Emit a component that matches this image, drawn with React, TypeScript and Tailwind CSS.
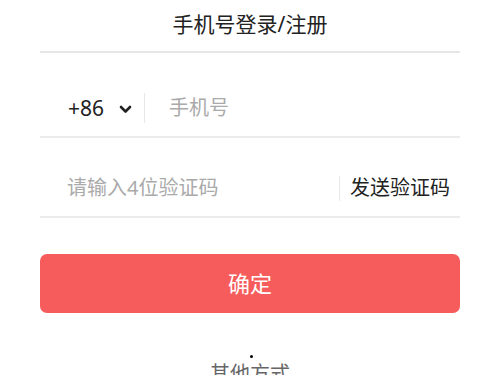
import { useState } from "react";

export default function App() {
  const [phone, setPhone] = useState("");
  const [code, setCode] = useState("");

  return (
    <div className="w-[500px] h-[375px] overflow-hidden bg-white px-10 font-['Noto_Sans','Noto_Sans_CJK_SC',sans-serif] text-[#222]">
      {/* Header */}
      <div className="h-[53px] flex items-center justify-center border-b-2 border-[#e6e6e6] pb-[2px]">
        <h1 className="text-[21px] leading-none">手机号登录/注册</h1>
      </div>

      {/* Phone row */}
      <div className="flex items-center pt-[40px] pb-[13px] border-b-2 border-[#ebebeb]">
        <div className="flex items-center pl-7 w-[104px] text-[21px] leading-[30px]">
          <span>+86</span>
          <svg className="ml-[15px] mt-[2px]" width="13" height="9" viewBox="0 0 13 9" fill="none">
            <path d="M2 2 L6.5 6.5 L11 2" stroke="#222" strokeWidth="2.6" strokeLinecap="round" strokeLinejoin="round" />
          </svg>
        </div>
        <div className="w-px h-[30px] bg-[#e8e8e8]" />
        <input
          value={phone}
          onChange={(e) => setPhone(e.target.value)}
          placeholder="手机号"
          className="ml-6 flex-1 text-[20px] leading-[30px] outline-none placeholder:text-[#aaa]"
        />
      </div>

      {/* Code row */}
      <div className="flex items-center pt-[35px] pb-[13px] border-b-2 border-[#ebebeb]">
        <input
          value={code}
          onChange={(e) => setCode(e.target.value)}
          placeholder="请输入4位验证码"
          className="ml-[27px] flex-1 min-w-0 text-[20px] leading-[30px] outline-none placeholder:text-[#aaa]"
        />
        <div className="w-px h-[25px] bg-[#e8e8e8]" />
        <button className="ml-[10px] mr-[10px] text-[20px] leading-[30px] text-[#222]">发送验证码</button>
      </div>

      {/* Submit */}
      <button className="mt-[36px] w-full h-[59px] rounded-[7px] bg-[#f65c5b] text-white text-[22px]">
        确定
      </button>

      {/* Other */}
      <div className="mt-[46px] flex justify-center">
        <div className="relative text-[20px] leading-[30px] text-[#666]">
          其他方式
          <span className="absolute left-[40px] top-[-4px] w-[3px] h-[3px] rounded-full bg-black" />
        </div>
      </div>
    </div>
  );
}
